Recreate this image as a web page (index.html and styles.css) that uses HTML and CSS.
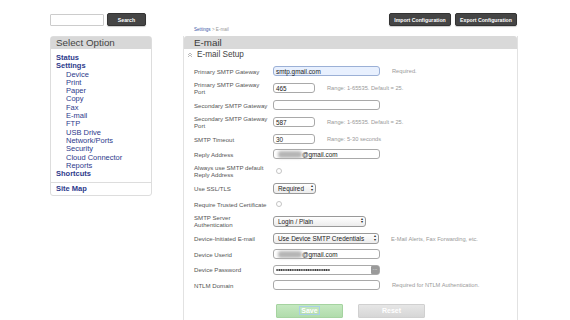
FILE: index.html
```html
<!DOCTYPE html>
<html lang="en">
<head>
    <meta charset="UTF-8">
    <title>E-mail Settings</title>
    <link rel="stylesheet" href="styles.css">
</head>
<body>
    <div class="page">
        <aside class="sidebar">
            <div class="search">
                <input class="search-input" type="text">
                <button class="dark-btn search-btn" type="button">Search</button>
            </div>
            <div class="menu">
                <div class="menu-title">Select Option</div>
                <ul class="menu-list">
                    <li class="top"><a href="#">Status</a></li>
                    <li class="top"><a href="#">Settings</a></li>
                    <li class="sub"><a href="#">Device</a></li>
                    <li class="sub"><a href="#">Print</a></li>
                    <li class="sub"><a href="#">Paper</a></li>
                    <li class="sub"><a href="#">Copy</a></li>
                    <li class="sub"><a href="#">Fax</a></li>
                    <li class="sub"><a href="#">E-mail</a></li>
                    <li class="sub"><a href="#">FTP</a></li>
                    <li class="sub"><a href="#">USB Drive</a></li>
                    <li class="sub"><a href="#">Network/Ports</a></li>
                    <li class="sub"><a href="#">Security</a></li>
                    <li class="sub"><a href="#">Cloud Connector</a></li>
                    <li class="sub"><a href="#">Reports</a></li>
                    <li class="top"><a href="#">Shortcuts</a></li>
                </ul>
                <div class="menu-footer"><a href="#">Site Map</a></div>
            </div>
        </aside>

        <main class="content">
            <div class="toolbar">
                <button class="dark-btn" type="button">Import Configuration</button>
                <button class="dark-btn" type="button">Export Configuration</button>
            </div>
            <div class="crumbs"><a href="#">Settings</a> &gt; E-mail</div>

            <section class="panel">
                <h1 class="panel-title">E-mail</h1>
                <h2 class="section-title">
                    <svg class="collapse-icon" viewBox="0 0 6 6" width="6" height="6">
                        <path d="M1 3 L3 1 L5 3 M1 5 L3 3 L5 5" fill="none" stroke="#aaa" stroke-width="0.8"/>
                    </svg>
                    E-mail Setup
                </h2>

                <div class="form">
                    <div class="row">
                        <label class="label">Primary SMTP Gateway</label>
                        <div class="input wide autofill">smtp.gmail.com</div>
                        <span class="note">Required.</span>
                    </div>
                    <div class="row">
                        <label class="label">Primary SMTP Gateway Port</label>
                        <div class="input narrow">465</div>
                        <span class="note">Range: 1-65535. Default = 25.</span>
                    </div>
                    <div class="row">
                        <label class="label">Secondary SMTP Gateway</label>
                        <div class="input wide"></div>
                    </div>
                    <div class="row">
                        <label class="label">Secondary SMTP Gateway Port</label>
                        <div class="input narrow">587</div>
                        <span class="note">Range: 1-65535. Default = 25.</span>
                    </div>
                    <div class="row">
                        <label class="label">SMTP Timeout</label>
                        <div class="input narrow">30</div>
                        <span class="note">Range: 5-30 seconds</span>
                    </div>
                    <div class="row">
                        <label class="label">Reply Address</label>
                        <div class="input wide"><span class="blur"></span>@gmail.com</div>
                    </div>
                    <div class="row">
                        <label class="label">Always use SMTP default Reply Address</label>
                        <span class="radio"></span>
                    </div>
                    <div class="row">
                        <label class="label">Use SSL/TLS</label>
                        <div class="select sel-ssl">Required <span class="arrows">&#9652;<br>&#9662;</span></div>
                    </div>
                    <div class="row">
                        <label class="label">Require Trusted Certificate</label>
                        <span class="radio"></span>
                    </div>
                    <div class="row">
                        <label class="label">SMTP Server Authentication</label>
                        <div class="select sel-auth">Login / Plain <span class="arrows">&#9652;<br>&#9662;</span></div>
                    </div>
                    <div class="row">
                        <label class="label">Device-Initiated E-mail</label>
                        <div class="select sel-cred">Use Device SMTP Credentials <span class="arrows">&#9652;<br>&#9662;</span></div>
                        <span class="note">E-Mail Alerts, Fax Forwarding, etc.</span>
                    </div>
                    <div class="row">
                        <label class="label">Device Userid</label>
                        <div class="input wide"><span class="blur"></span>@gmail.com</div>
                    </div>
                    <div class="row">
                        <label class="label">Device Password</label>
                        <div class="input wide password"><span class="dots"></span><span class="key">&middot;&middot;&middot;</span></div>
                    </div>
                    <div class="row">
                        <label class="label">NTLM Domain</label>
                        <div class="input wide"></div>
                        <span class="note">Required for NTLM Authentication.</span>
                    </div>

                    <div class="actions">
                        <button class="action save" type="button"><span>Save</span></button>
                        <button class="action reset" type="button">Reset</button>
                    </div>
                </div>
            </section>
        </main>
    </div>
</body>
</html>
```

FILE: styles.css
```css
* {
    box-sizing: border-box;
    margin: 0;
    padding: 0;
}

body {
    background-color: #fff;
    font-family: 'Liberation Sans', Arial, sans-serif;
    color: #444;
}

a {
    text-decoration: none;
}

.page {
    display: flex;
    gap: 31px;
    padding: 13px 0 0 50px;
}

/* Sidebar */
.sidebar {
    width: 102px;
    flex-shrink: 0;
}

.search {
    display: flex;
    align-items: flex-start;
    gap: 3px;
    height: 14px;
}

.search-input {
    width: 54px;
    height: 12px;
    margin-top: 1px;
    border: 1px solid #ccc;
    border-radius: 1px;
}

.dark-btn {
    height: 13px;
    padding: 0 5px;
    background-color: #454545;
    color: #fff;
    border: 1px solid #333;
    border-radius: 2px;
    font-family: 'Liberation Sans', Arial, sans-serif;
    font-size: 5.2px;
    font-weight: bold;
    box-shadow: 0 1px 1px rgba(0, 0, 0, 0.2);
}

.search-btn {
    width: 39px;
}

.menu {
    margin-top: 9px;
    border: 1px solid #ddd;
    border-radius: 3px;
}

.menu-title {
    height: 12px;
    padding-left: 5px;
    background-color: #d8d8d8;
    color: #444;
    font-size: 9.8px;
    line-height: 12px;
}

.menu-list {
    list-style: none;
    padding: 5px 0 4px;
}

.menu-list li {
    font-size: 7.5px;
    line-height: 8.3px;
}

.menu-list a,
.menu-footer a {
    color: #2d3a8c;
}

.menu-list .top {
    padding-left: 5px;
    font-weight: bold;
}

.menu-list .sub {
    padding-left: 15px;
}

.menu-footer {
    border-top: 1px solid #ddd;
    padding: 2px 0 2px 5px;
    font-size: 7.5px;
    line-height: 8px;
    font-weight: bold;
}

/* Main content */
.content {
    width: 335px;
    flex-shrink: 0;
}

.toolbar {
    display: flex;
    justify-content: flex-end;
    gap: 4px;
    height: 13px;
    padding-right: 1px;
}

.toolbar .dark-btn {
    width: 62px;
    padding: 0;
}

.crumbs {
    padding-left: 11px;
    margin-bottom: 3px;
    font-size: 4.6px;
    line-height: 7px;
    color: #999;
}

.crumbs a {
    color: #3d5aa8;
}

.panel {
    border-left: 1px solid #e2e2e2;
    border-right: 1px solid #e2e2e2;
    min-height: 290px;
}

.panel-title {
    height: 13px;
    padding-left: 10px;
    background-color: #d9d9d9;
    border-radius: 3px 3px 0 0;
    font-size: 9.8px;
    font-weight: normal;
    line-height: 13px;
    color: #3a3a3a;
}

.section-title {
    display: flex;
    align-items: center;
    gap: 4px;
    padding-left: 3px;
    height: 11px;
    font-size: 8.2px;
    font-weight: normal;
    color: #444;
}

.collapse-icon {
    flex-shrink: 0;
}

.form {
    padding: 6px 0 0 10px;
}

.row {
    display: flex;
    align-items: center;
    min-height: 10px;
    margin-bottom: 5px;
}

.row:nth-child(n+12) {
    margin-bottom: 5.5px;
}

.label {
    width: 79px;
    flex-shrink: 0;
    padding-right: 5px;
    font-size: 6.1px;
    line-height: 7px;
    color: #555;
}

.input {
    display: flex;
    align-items: center;
    height: 10px;
    padding: 0 2px;
    border: 1px solid #a9a9a9;
    border-radius: 3px;
    background-color: #fff;
    font-size: 6.4px;
    color: #222;
}

.input.wide {
    width: 107px;
}

.input.narrow {
    width: 42px;
}

.input.autofill {
    background-color: #e8f0fe;
    border-color: #9bb0d6;
}

.blur {
    display: inline-block;
    width: 24px;
    height: 7px;
    margin-left: 2px;
    background-color: #b5b5b5;
    border-radius: 3px;
    filter: blur(1.5px);
}

.password {
    position: relative;
}

.dots {
    width: 54px;
    height: 2px;
    background-image: radial-gradient(circle, #333 0.8px, transparent 1px);
    background-size: 2.25px 2px;
}

.key {
    position: absolute;
    right: 0;
    top: 0;
    width: 8px;
    height: 8px;
    background-color: #9a9a9a;
    border-radius: 1px;
    color: #fff;
    font-size: 5px;
    line-height: 6px;
    text-align: center;
}

.note {
    margin-left: 12px;
    font-size: 5.7px;
    color: #999;
}

.radio {
    width: 6px;
    height: 6px;
    margin-left: 3px;
    border: 1px solid #c4c4c4;
    border-radius: 50%;
}

.select {
    display: flex;
    align-items: center;
    justify-content: space-between;
    height: 11px;
    padding: 0 2px 0 4px;
    border: 1px solid #999;
    border-radius: 3px;
    background: linear-gradient(#fff, #ececec);
    font-size: 6.4px;
    color: #222;
}

.sel-ssl {
    width: 43px;
}

.sel-auth {
    width: 93px;
}

.sel-cred {
    width: 106px;
}

.arrows {
    font-size: 3.6px;
    line-height: 3.2px;
    text-align: center;
    color: #222;
}

.actions {
    display: flex;
    gap: 15px;
    padding: 8px 0 0 82px;
}

.action {
    width: 67px;
    height: 14px;
    border-radius: 1px;
    color: #fff;
    font-family: 'Liberation Sans', Arial, sans-serif;
    font-size: 7px;
    font-weight: bold;
}

.save {
    background: linear-gradient(#c4e8c0, #b0dcab);
    border: 1px solid #a5d3a0;
}

.save span {
    padding: 0 1px;
    outline: 1px solid #a9cfe6;
}

.reset {
    background: linear-gradient(#e6e6e6, #d6d6d6);
    border: 1px solid #d0d0d0;
}
```
